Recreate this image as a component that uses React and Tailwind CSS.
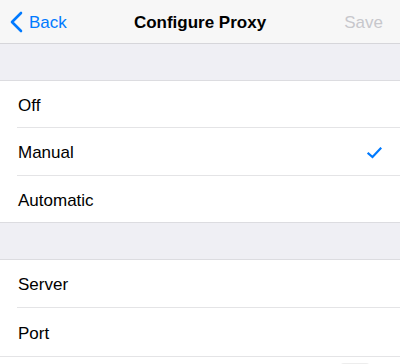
export default function App() {
  const font = { fontFamily: '"Helvetica Neue", "Liberation Sans", Arial, sans-serif' };
  return (
    <div className="w-[400px] h-[364px] overflow-hidden bg-[#efeff4] relative" style={font}>
      {/* Nav bar */}
      <div className="h-[44px] bg-[#f7f7f7] border-b border-[#d6d6da] flex items-center relative pt-[1px]">
        <div className="flex items-center pl-[10px] text-[#007aff]">
          <svg width="13" height="22" viewBox="0 0 13 22" className="mr-[6px]">
            <path d="M11 2 L2 11 L11 20" fill="none" stroke="#007aff" strokeWidth="2.6" strokeLinecap="round" strokeLinejoin="round" />
          </svg>
          <span className="text-[17px] leading-none">Back</span>
        </div>
        <div className="absolute left-0 right-0 text-center text-[17px] font-bold text-black leading-none">Configure Proxy</div>
        <div className="ml-auto pr-[17px] text-[17px] text-[#c7c7cc] leading-none">Save</div>
      </div>

      {/* Gap */}
      <div className="h-[37px] border-b border-[#dcdce0]" />

      {/* Section 1 */}
      <div className="bg-white border-b border-[#dcdce0]">
        <Row label="Off" h="h-[46px]" />
        <Sep />
        <Row label="Manual" checked h="h-[47px]" />
        <Sep />
        <Row label="Automatic" h="h-[46px]" />
      </div>

      <div className="h-[37px] border-b border-[#dcdce0]" />

      <div className="bg-white">
        <Row label="Server" h="h-[47px]" />
        <Sep />
        <Row label="Port" h="h-[48px]" />
        <div className="h-px bg-[#e4e4e6]" />
        <div className="h-[10px] bg-white relative">
          <div className="absolute left-[340px] top-[6px] w-[30px] h-[4px] rounded-t bg-[#ededed]" />
        </div>
      </div>
    </div>
  );
}

function Sep() {
  return <div className="ml-[17px] h-px bg-[#e4e4e6]" />;
}

function Row({ label, checked, h = "h-[46px]" }) {
  return (
    <div className={`${h} flex items-center pl-[18px] pr-[18px] pt-[2px]`}>
      <span className="text-[17px] text-black leading-none">{label}</span>
      {checked && (
        <svg width="15" height="12" viewBox="0 0 15 12" className="ml-auto">
          <path d="M1.5 6.5 L5.5 10 L13.5 1.5" fill="none" stroke="#007aff" strokeWidth="2.2" strokeLinecap="square" />
        </svg>
      )}
    </div>
  );
}
